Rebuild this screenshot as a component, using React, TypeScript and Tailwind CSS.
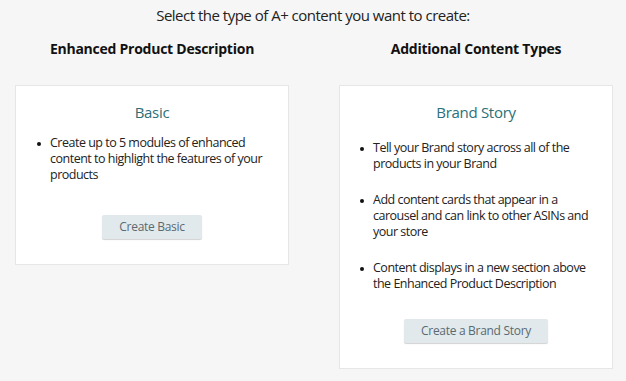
import React from 'react';

const font = { fontFamily: '"Open Sans", "Liberation Sans", sans-serif' };

const Bullet = ({ children, className = '' }: { children: React.ReactNode; className?: string }) => (
  <li className={`flex gap-[9px] ${className}`}>
    <span className="mt-[7px] h-[4px] w-[4px] shrink-0 rounded-full bg-[#111]"></span>
    <span>{children}</span>
  </li>
);

const CardButton = ({ label }: { label: string }) => (
  <button className="h-[24px] rounded-[2px] bg-[#e1e9ec] px-[17px] text-[12px] tracking-[-0.3px] text-[#5b6a70] shadow-[0_1px_1px_rgba(0,0,0,0.18)]">
    {label}
  </button>
);

export default function App() {
  return (
    <div style={font} className="min-h-[381px] w-[626px] bg-[#f6f6f6] text-[#222]">
      <p className="pt-[5px] text-center text-[15px] leading-[20px] tracking-[-0.5px] text-[#222]">
        Select the type of A+ content you want to create:
      </p>

      <div className="mt-[14px] grid grid-cols-2 gap-[50px] pl-[15px] pr-[13px]">
        {/* Enhanced Product Description */}
        <div>
          <h2 className="text-center text-[14px] font-bold leading-[20px] tracking-[-0.25px] text-[#111]">
            Enhanced Product Description
          </h2>
          <div className="mt-[26px] border border-[#e6e6e6] bg-white px-[20px] pb-[25px] pt-[16px]">
            <h3 className="text-center text-[15px] leading-[20px] tracking-[-0.3px] text-[#2b7078]">Basic</h3>
            <ul className="mt-[13px] pl-[1px] text-[12.5px] leading-[16px] tracking-[-0.5px]">
              <Bullet>Create up to 5 modules of enhanced content to highlight the features of your products</Bullet>
            </ul>
            <div className="mt-[32px] flex justify-center">
              <CardButton label="Create Basic" />
            </div>
          </div>
        </div>

        {/* Additional Content Types */}
        <div>
          <h2 className="text-center text-[14px] font-bold leading-[20px] tracking-[-0.25px] text-[#111]">
            Additional Content Types
          </h2>
          <div className="mt-[26px] border border-[#e6e6e6] bg-white px-[19px] pb-[25px] pt-[16px]">
            <h3 className="text-center text-[15px] leading-[20px] tracking-[-0.3px] text-[#2b7078]">Brand Story</h3>
            <ul className="mt-[18px] space-y-[20px] pl-[1px] text-[12.5px] leading-[16px] tracking-[-0.5px]">
              <Bullet>Tell your Brand story across all of the products in your Brand</Bullet>
              <Bullet>Add content cards that appear in a carousel and can link to other ASINs and your store</Bullet>
              <Bullet>Content displays in a new section above the Enhanced Product Description</Bullet>
            </ul>
            <div className="mt-[27px] flex justify-center">
              <CardButton label="Create a Brand Story" />
            </div>
          </div>
        </div>
      </div>
    </div>
  );
}
